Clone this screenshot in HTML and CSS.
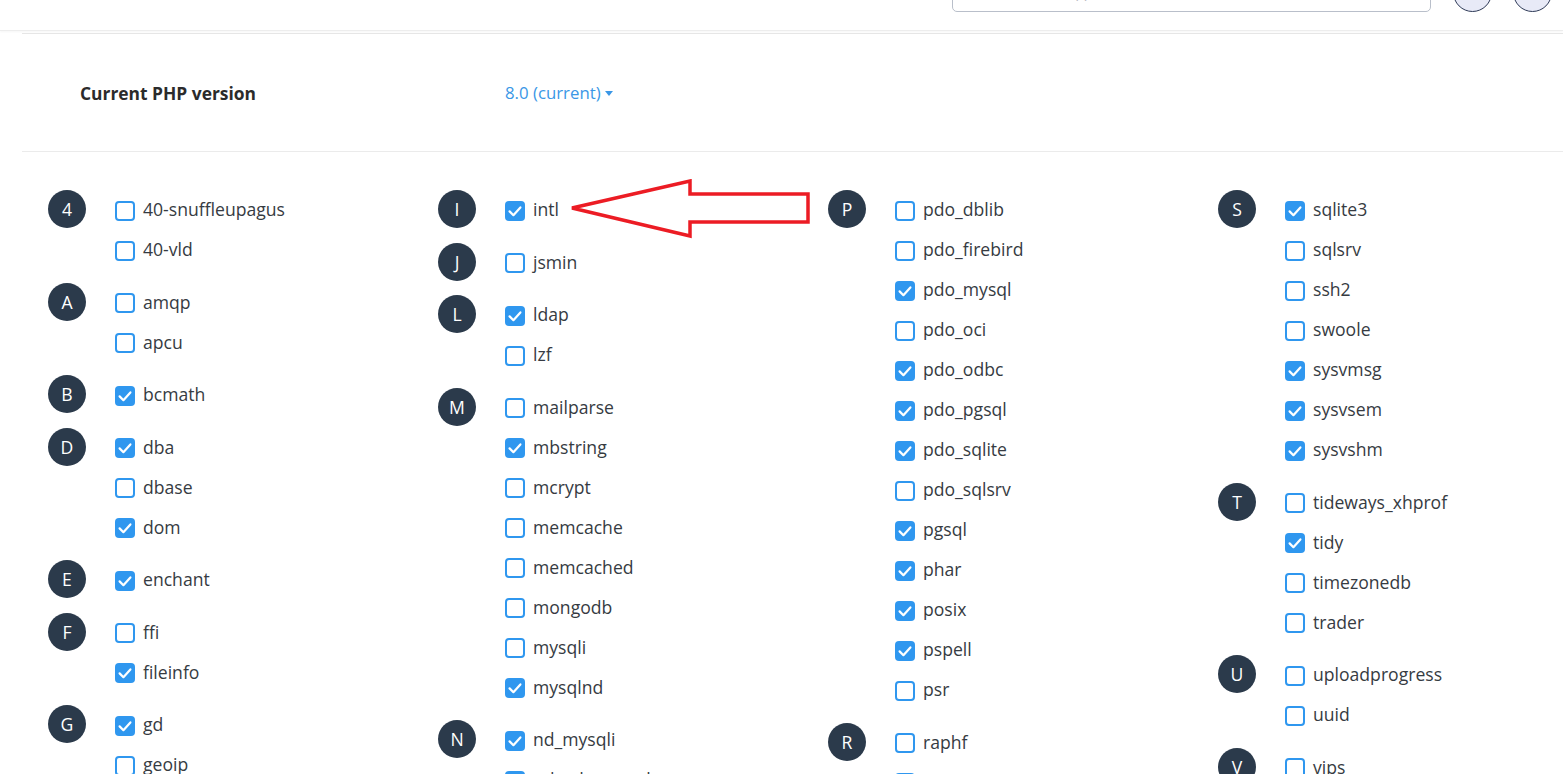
FILE: index.html
```html
<!DOCTYPE html>
<html lang="en">
<head>
<meta charset="utf-8">
<title>Select PHP Version</title>
<link rel="stylesheet" href="styles.css">
</head>
<body>
<header class="topbar">
  <div class="search">
    <span class="search-text">Search Tools (/)</span>
    <svg class="search-icon" width="16" height="16" viewBox="0 0 16 16"><circle cx="6.5" cy="6.5" r="5" fill="none" stroke="#555" stroke-width="1.6"/><path d="M10.2 10.2 L14.5 14.5" stroke="#555" stroke-width="1.8" stroke-linecap="round"/></svg>
  </div>
  <div class="avatar">?</div>
  <div class="avatar">M</div>
</header>

<main class="content">
  <section class="version-row">
    <div class="version-label">Current PHP version</div>
    <div class="version-value">8.0 (current)<span class="caret"></span></div>
  </section>

  <section class="ext-grid" id="grid"></section>

  <svg class="arrow" width="250" height="64" viewBox="0 0 250 64">
    <polygon points="4,29 122,2 122,15 240,15 240,43 122,43 122,57" fill="none" stroke="#ec1c24" stroke-width="3.5" stroke-linejoin="miter"/>
  </svg>
</main>

<script src="app.js"></script>
</body>
</html>
```
FILE: app.js
```js
const columns = [
  [
    ["4", [["40-snuffleupagus",0],["40-vld",0]]],
    ["A", [["amqp",0],["apcu",0]]],
    ["B", [["bcmath",1]]],
    ["D", [["dba",1],["dbase",0],["dom",1]]],
    ["E", [["enchant",1]]],
    ["F", [["ffi",0],["fileinfo",1]]],
    ["G", [["gd",1],["geoip",0],["gettext",1],["gmp",1]]]
  ],
  [
    ["I", [["intl",1]]],
    ["J", [["jsmin",0]]],
    ["L", [["ldap",1],["lzf",0]]],
    ["M", [["mailparse",0],["mbstring",1],["mcrypt",0],["memcache",0],["memcached",0],["mongodb",0],["mysqli",0],["mysqlnd",1]]],
    ["N", [["nd_mysqli",1],["nd_pdo_mysql",1]]]
  ],
  [
    ["P", [["pdo_dblib",0],["pdo_firebird",0],["pdo_mysql",1],["pdo_oci",0],["pdo_odbc",1],["pdo_pgsql",1],["pdo_sqlite",1],["pdo_sqlsrv",0],["pgsql",1],["phar",1],["posix",1],["pspell",1],["psr",0]]],
    ["R", [["raphf",0],["recode",0]]]
  ],
  [
    ["S", [["sqlite3",1],["sqlsrv",0],["ssh2",0],["swoole",0],["sysvmsg",1],["sysvsem",1],["sysvshm",1]]],
    ["T", [["tideways_xhprof",0],["tidy",1],["timezonedb",0],["trader",0]]],
    ["U", [["uploadprogress",0],["uuid",0]]],
    ["V", [["vips",0],["wddx",0]]]
  ]
];
const check = '<svg width="20" height="20" viewBox="0 0 20 20"><path d="M4.6 10.4 L8.4 14.2 L15.4 6.4" fill="none" stroke="#fff" stroke-width="2.2" stroke-linecap="round" stroke-linejoin="round"/></svg>';
const grid = document.getElementById('grid');
grid.innerHTML = columns.map(col =>
  '<div class="ext-col">' + col.map(([letter, items]) =>
    '<div class="group"><div class="letter">' + letter + '</div><ul class="items">' +
    items.map(([name, on]) =>
      '<li class="item"><span class="box' + (on ? ' checked' : '') + '">' + (on ? check : '') + '</span><span class="name">' + name + '</span></li>'
    ).join('') + '</ul></div>'
  ).join('') + '</div>'
).join('');
```
FILE: styles.css
```css
html, body {
  margin: 0;
  padding: 0;
  height: 100%;
  overflow: hidden;
  background: #fff;
}
body {
  font-family: "Open Sans", "Liberation Sans", sans-serif;
  color: #333840;
}
.topbar {
  height: 31px;
  box-sizing: border-box;
  display: flex;
  align-items: flex-end;
  justify-content: flex-end;
  padding: 0 11px 18px 0;
  gap: 21px;
  overflow: hidden;
  border-bottom: 1px solid #ededed;
  box-shadow: 0 1px 2px rgba(0,0,0,0.04);
}
.search {
  width: 479px;
  height: 40px;
  flex: none;
  box-sizing: border-box;
  border: 1px solid #b9bfca;
  border-radius: 5px;
  display: flex;
  align-items: center;
  padding: 0 14px 0 22px;
  margin-right: 1px;
}
.search-text {
  flex: 1;
  font-size: 16px;
  color: #6b7280;
}
.search-icon { flex: none; }
.avatar {
  width: 39px;
  height: 39px;
  flex: none;
  box-sizing: border-box;
  border-radius: 50%;
  background: #e8eaf7;
  border: 1px solid #2e3a57;
  display: flex;
  align-items: center;
  justify-content: center;
  font-size: 16px;
  font-weight: 700;
  color: #2e3a57;
}
.content {
  position: relative;
  margin-left: 22px;
  border-top: 1px solid #e6e6e6;
  margin-top: 2px;
}
.version-row {
  height: 118px;
  display: flex;
  align-items: center;
  border-bottom: 1px solid #ebebeb;
  box-sizing: border-box;
  padding: 0 0 0 58px;
}
.version-label {
  width: 425px;
  font-size: 17.4px;
  font-weight: 700;
  color: #2b2b2b;
}
.version-value {
  font-size: 16.8px;
  color: #3a97e6;
  display: flex;
  align-items: center;
}
.caret {
  width: 0;
  height: 0;
  margin-left: 4px;
  margin-top: 2px;
  border-left: 4.5px solid transparent;
  border-right: 4.5px solid transparent;
  border-top: 5px solid #3a97e6;
}
.ext-grid {
  display: grid;
  grid-template-columns: repeat(4, 390px);
  padding: 37px 0 0 26px;
}
.ext-col {
  display: flex;
  flex-direction: column;
  gap: 12.5px;
}
.group {
  display: flex;
  align-items: flex-start;
}
.letter {
  width: 38px;
  height: 38px;
  margin-top: 1px;
  flex: none;
  border-radius: 50%;
  background: #2b3a4b;
  color: #fff;
  font-size: 17.6px;
  display: flex;
  align-items: center;
  justify-content: center;
}
.items {
  list-style: none;
  margin: 0 0 0 29px;
  padding: 0;
}
.item {
  height: 40px;
  display: flex;
  align-items: center;
  gap: 8px;
}
.box {
  width: 20px;
  height: 20px;
  box-sizing: border-box;
  border: 2px solid #2f97ef;
  border-radius: 4px;
  flex: none;
  margin-top: 3px;
  display: flex;
}
.box.checked {
  background: #2f97ef;
  border: none;
}
.name {
  font-size: 17.6px;
  color: #363b42;
}
.arrow {
  position: absolute;
  left: 546px;
  top: 145px;
}
```
